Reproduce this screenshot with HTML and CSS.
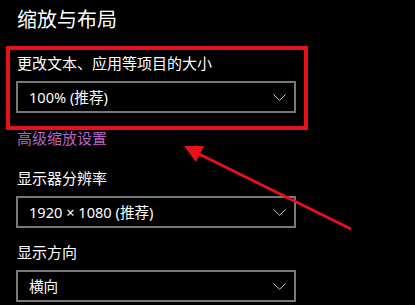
FILE: index.html
```html
<!DOCTYPE html>
<html lang="zh-CN">
<head>
<meta charset="utf-8">
<title>缩放与布局</title>
<link rel="stylesheet" href="styles.css">
</head>
<body>
<div class="page">
  <h1 class="title">缩放与布局</h1>
  <div class="highlight">
    <div class="label">更改文本、应用等项目的大小</div>
    <div class="select">
      <span class="value">100% (推荐)</span>
      <svg class="chev" width="13" height="7" viewBox="0 0 13 7"><polyline points="0.5,0.5 6.5,6.3 12.5,0.5" fill="none" stroke="#cfcfcf" stroke-width="1"/></svg>
    </div>
  </div>
  <div class="section">
    <div class="link">高级缩放设置</div>
    <div class="label label-2">显示器分辨率</div>
    <div class="select">
      <span class="value">1920 × 1080 (推荐)</span>
      <svg class="chev" width="13" height="7" viewBox="0 0 13 7"><polyline points="0.5,0.5 6.5,6.3 12.5,0.5" fill="none" stroke="#cfcfcf" stroke-width="1"/></svg>
    </div>
    <div class="label label-3">显示方向</div>
    <div class="select">
      <span class="value">横向</span>
      <svg class="chev" width="13" height="7" viewBox="0 0 13 7"><polyline points="0.5,0.5 6.5,6.3 12.5,0.5" fill="none" stroke="#cfcfcf" stroke-width="1"/></svg>
    </div>
  </div>
  <svg class="arrow" width="415" height="305" viewBox="0 0 415 305">
    <line x1="199" y1="149" x2="351" y2="224" stroke="#e5121b" stroke-width="3"/>
    <polygon points="184,141 204,141 196,157" fill="#e5121b"/>
  </svg>
</div>
</body>
</html>
```
FILE: styles.css
```css
html, body {
  margin: 0;
  padding: 0;
  background: #000;
}
body {
  width: 415px;
  height: 305px;
  overflow: hidden;
  font-family: "Noto Sans", "Noto Sans CJK SC", sans-serif;
  color: #fff;
}
.page {
  position: relative;
  width: 415px;
  height: 305px;
}
.title {
  margin: 5px 0 13px 17px;
  font-family: "Noto Sans CJK SC", sans-serif;
  font-size: 20px;
  font-weight: 400;
  line-height: 28px;
}
.highlight {
  margin-left: 6px;
  border: 4px solid #e5121b;
  padding: 3px 0 13px 6px;
  width: 288px;
}
.label {
  font-family: "Noto Sans CJK SC", sans-serif;
  font-size: 15px;
  line-height: 20px;
  margin: 0 0 8px 1px;
}
.section {
  padding-left: 16px;
}
.link {
  font-family: "Noto Sans CJK SC", sans-serif;
  font-size: 15px;
  line-height: 16px;
  color: #b863c6;
  margin-left: 1px;
}
.label-2 {
  margin-top: 22px;
}
.label-3 {
  margin-top: 14px;
}
.select {
  width: 280px;
  height: 32px;
  box-sizing: border-box;
  border: 2px solid #787878;
  display: flex;
  align-items: center;
  justify-content: space-between;
  padding: 0 8px 0 11px;
}
.value {
  font-size: 14.6px;
  line-height: 20px;
}
.chev {
  display: block;
}
.arrow {
  position: absolute;
  left: 0;
  top: 0;
  pointer-events: none;
}
```
